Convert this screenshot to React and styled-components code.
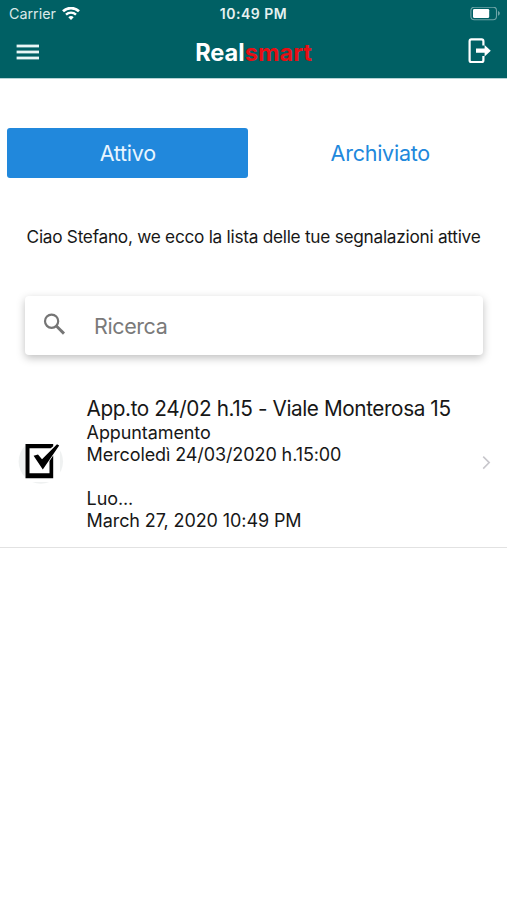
import { useState } from "react";
import styled, { createGlobalStyle } from "styled-components";

const tabs = ["Attivo", "Archiviato"];

const reports = [
  {
    id: 1,
    title: "App.to 24/02 h.15 - Viale Monterosa 15",
    type: "Appuntamento",
    when: "Mercoledì 24/03/2020 h.15:00",
    note: "Luo...",
    created: "March 27, 2020 10:49 PM",
  },
];

const WifiIcon = () => (
  <svg width="18" height="14" viewBox="0 0 18 14" fill="none" stroke="#fff">
    <path d="M1 4.3a11.6 11.6 0 0 1 16 0" strokeWidth="2.7" />
    <path d="M4 7.6a7.2 7.2 0 0 1 10 0" strokeWidth="2.4" />
    <path d="M9 13.1 6.3 10.3a3.9 3.9 0 0 1 5.4 0z" fill="#fff" stroke="none" />
  </svg>
);

const BatteryIcon = () => (
  <svg width="31" height="14" viewBox="0 0 31 14">
    <rect
      x="0.9"
      y="0.1"
      width="25.6"
      height="12.6"
      rx="3.4"
      fill="none"
      stroke="#6fa5a8"
      strokeWidth="1.1"
    />
    <rect x="3" y="1.9" width="16.2" height="9.2" rx="1.4" fill="#fff" />
    <path d="M28 4.1c2.4.8 2.4 3.8 0 4.6z" fill="#6fa5a8" />
  </svg>
);

const MenuIcon = () => (
  <svg width="23" height="18" viewBox="0 0 23 18" fill="#e9f6f6">
    <rect x="0.6" y="0.6" width="22.4" height="2.8" />
    <rect x="0.6" y="6.6" width="22.4" height="2.8" />
    <rect x="0.6" y="12.6" width="22.4" height="2.8" />
  </svg>
);

const LogoutIcon = () => (
  <svg width="24" height="29" viewBox="0 0 24 29">
    <path
      d="M15.4 7.4V3.2Q15.4 1.4 13.6 1.4H3.4Q1.6 1.4 1.6 3.2V22.2Q1.6 24 3.4 24H13.6Q15.4 24 15.4 22.2V18"
      fill="none"
      stroke="#fff"
      strokeWidth="2.2"
    />
    <path d="M8 10.6h8.6V7l6.2 5.7-6.2 5.7v-3.6H8z" fill="#fff" />
  </svg>
);

const SearchIcon = () => (
  <svg width="22" height="26" viewBox="0 0 22 26" fill="none" stroke="#757575">
    <circle cx="8.6" cy="8.2" r="6.6" strokeWidth="2.2" />
    <path d="m13.4 13 7.6 7.6" strokeWidth="2.9" />
  </svg>
);

const CheckIcon = () => (
  <svg width="46" height="46" viewBox="0 0 46 46">
    <circle cx="22.8" cy="22.5" r="22.2" fill="#eff1f1" />
    <rect x="7" y="0" width="35" height="43" fill="#fff" />
    <path
      d="M35.2 5V7.2L32.7 9.2H11.5V34.3H31.5V22L35.2 16.6V39.3H7.5V5z"
      fill="#000"
    />
    <path
      d="M15.6 16.8 20 15.4 24 20.2 39 5.2 41.2 6.4 24.8 30.4z"
      fill="#000"
    />
  </svg>
);

const ChevronIcon = () => (
  <svg width="9" height="16" viewBox="0 0 9 16" fill="none">
    <path d="m1.2 2.6 6 6-6 6" stroke="#c8c7cc" strokeWidth="1.6" />
  </svg>
);

const App = () => {
  let [active, setActive] = useState("Attivo");
  let [search, setSearch] = useState("");

  return (
    <Page>
      <GlobalStyle />
      <Header>
        <StatusBar>
          <Carrier>
            Carrier <WifiIcon />
          </Carrier>
          <Clock>10:49 PM</Clock>
          <Battery>
            <BatteryIcon />
          </Battery>
        </StatusBar>
        <NavBar>
          <IconButton aria-label="Menu">
            <MenuIcon />
          </IconButton>
          <Brand>
            Real<span>smart</span>
          </Brand>
          <IconButton aria-label="Logout">
            <LogoutIcon />
          </IconButton>
        </NavBar>
      </Header>

      <Tabs>
        {tabs.map((tab) => (
          <Tab key={tab} $active={tab === active} onClick={() => setActive(tab)}>
            {tab}
          </Tab>
        ))}
      </Tabs>

      <Greeting>Ciao Stefano, we ecco la lista delle tue segnalazioni attive</Greeting>

      <SearchBox>
        <SearchIcon />
        <SearchInput
          type="text"
          placeholder="Ricerca"
          value={search}
          onChange={(event) => setSearch(event.target.value)}
        />
      </SearchBox>

      <List>
        {reports.map((report) => (
          <Row key={report.id}>
            <CheckIcon />
            <Details>
              <Title>{report.title}</Title>
              <Line>{report.type}</Line>
              <Line>{report.when}</Line>
              <Note>{report.note}</Note>
              <Line>{report.created}</Line>
            </Details>
            <ChevronIcon />
          </Row>
        ))}
      </List>
    </Page>
  );
};

const GlobalStyle = createGlobalStyle`
  * {
    box-sizing: border-box;
  }

  body {
    margin: 0;
    background: #fff;
    font-family: Inter, "Liberation Sans", sans-serif;
  }

  svg {
    display: block;
    flex-shrink: 0;
  }
`;

const Page = styled.div`
  min-height: 900px;
  background: #fff;
  color: #171717;
`;

const Header = styled.header`
  height: 79px;
  background: #006064;
  border-bottom: 1px solid #b5d3d5;
  color: #fff;
`;

const StatusBar = styled.div`
  display: grid;
  grid-template-columns: 1fr auto 1fr;
  align-items: center;
  height: 27px;
  padding: 0 6px 0 9px;
`;

const Carrier = styled.div`
  display: flex;
  align-items: center;
  gap: 6px;
  font-size: 14.3px;
  color: #d9e8e9;
`;

const Clock = styled.div`
  margin-right: 3px;
  font-size: 14px;
  font-weight: 600;
  letter-spacing: 0.5px;
  color: #e6f1f1;
`;

const Battery = styled.div`
  display: flex;
  justify-content: flex-end;
`;

const NavBar = styled.nav`
  display: flex;
  align-items: center;
  justify-content: space-between;
  height: 49px;
  padding: 2px 15px 0 16px;
`;

const IconButton = styled.button`
  padding: 0;
  border: 0;
  background: none;
`;

const Brand = styled.h1`
  margin: 0;
  font-size: 23.6px;
  font-weight: 700;

  span {
    color: #e60f14;
  }
`;

const Tabs = styled.div`
  display: flex;
  gap: 12px;
  padding: 49px 7px 0;
`;

const Tab = styled.button`
  flex: 1;
  height: 50px;
  padding: 0 0 0 1px;
  border: 0;
  border-radius: 3px;
  background: ${(props) => (props.$active ? "#2188dc" : "transparent")};
  color: ${(props) => (props.$active ? "#e8f5ff" : "#2188dc")};
  font-family: inherit;
  font-size: 21.5px;
  letter-spacing: -0.25px;
`;

const Greeting = styled.p`
  margin: 48px 0 0;
  text-align: center;
  font-size: 17.25px;
  letter-spacing: -0.27px;
  line-height: 22px;
  white-space: nowrap;
`;

const SearchBox = styled.label`
  display: flex;
  align-items: center;
  gap: 29px;
  height: 59px;
  margin: 48px 24px 0 25px;
  padding: 0 18px;
  border-radius: 4px;
  background: #fff;
  box-shadow: 0 3px 8px rgba(0, 0, 0, 0.25);
`;

const SearchInput = styled.input`
  flex: 1;
  min-width: 0;
  padding: 0;
  border: 0;
  outline: 0;
  background: none;
  font-family: inherit;
  font-size: 21.5px;
  letter-spacing: -0.4px;

  &::placeholder {
    color: #7a7a7a;
  }
`;

const List = styled.div`
  margin-top: 22px;
`;

const Row = styled.div`
  display: flex;
  align-items: center;
  height: 171px;
  padding: 0 16px 0 18px;
  border-bottom: 1px solid #e2e2e2;
`;

const Details = styled.div`
  flex: 1;
  margin-left: 22.6px;
  padding-top: 3px;
  white-space: nowrap;
`;

const Title = styled.div`
  font-size: 20.75px;
  letter-spacing: -0.41px;
  line-height: 26px;
`;

const Line = styled.div`
  font-size: 18px;
  letter-spacing: -0.1px;
  line-height: 22px;
`;

const Note = styled(Line)`
  margin-top: 22px;
`;

export default App;
